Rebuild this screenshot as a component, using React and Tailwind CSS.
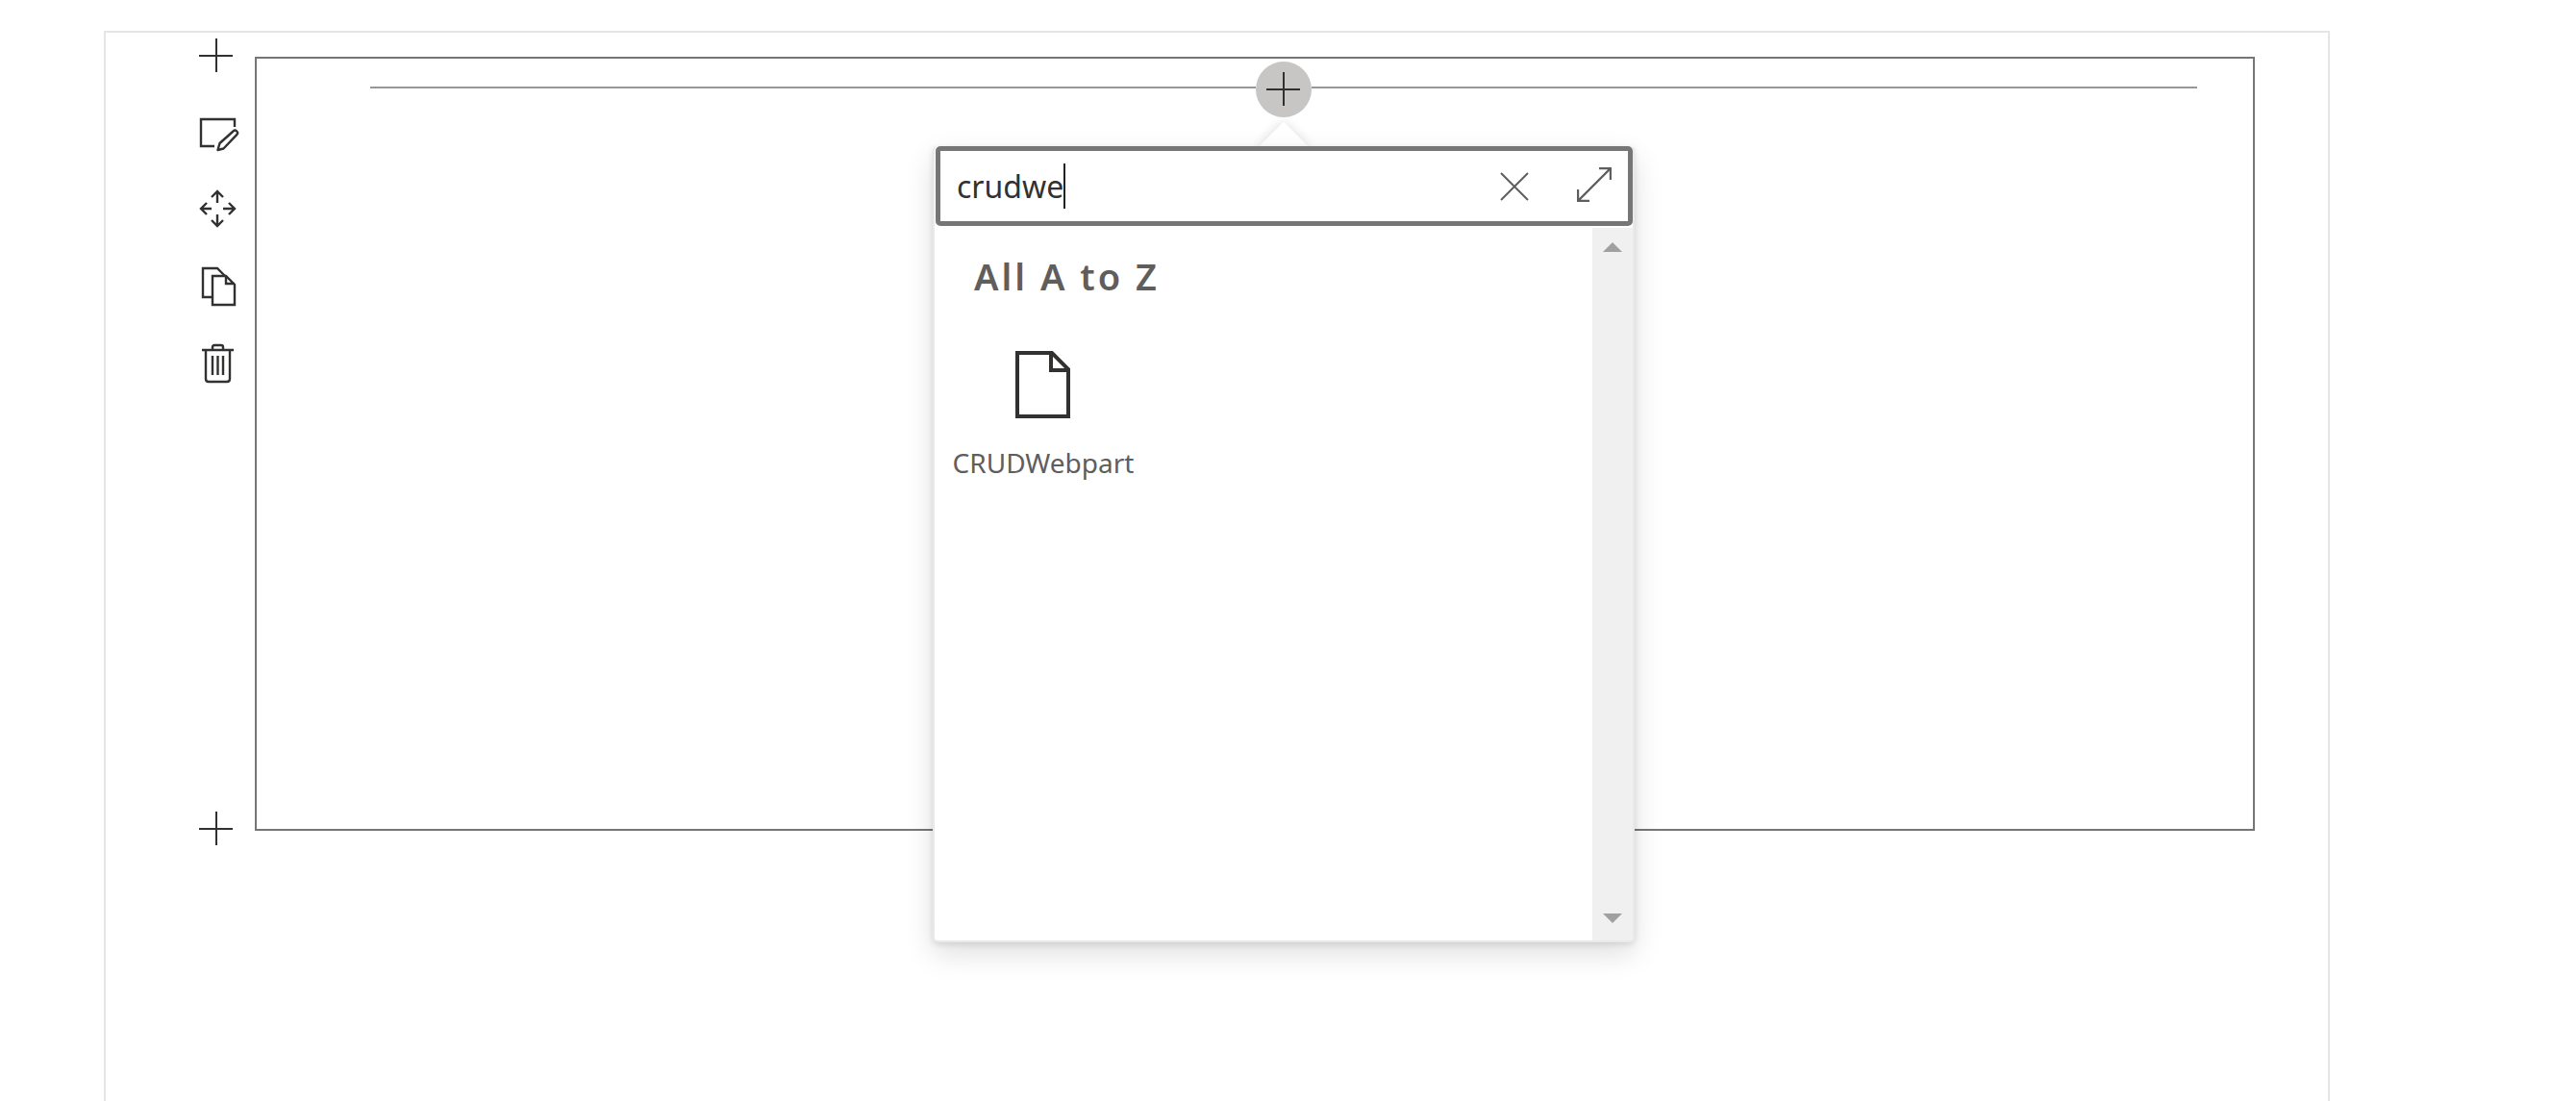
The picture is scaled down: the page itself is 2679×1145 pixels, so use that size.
import React, { useState } from "react";

function PlusIcon() {
  return (
    <svg className="size-9" viewBox="0 0 36 36" fill="none" stroke="currentColor" strokeWidth="2" aria-hidden="true">
      <path d="M18 0v35M0 18h35" />
    </svg>
  );
}

function EditIcon() {
  return (
    <svg className="size-12" viewBox="-1 0 48 48" fill="none" stroke="currentColor" strokeWidth="2.4" aria-hidden="true">
      <path d="M42 18V10H7v28h14" />
      <path d="M24.500 42l2-7 14-12.500a2.600 2.600 0 0 1 3.700 3.700L30.500 40.500z" strokeLinejoin="round" />
    </svg>
  );
}

function MoveIcon() {
  return (
    <svg className="size-12" viewBox="-1 1 48 48" fill="none" stroke="currentColor" strokeWidth="2.4" aria-hidden="true">
      <path d="M24 18V6M18 12l6-6 6 6M24 30v12M18 36l6 6 6-6M18 24H7M13 18l-6 6 6 6M30 24h12M36 18l6 6-6 6" />
    </svg>
  );
}

function CopyIcon() {
  return (
    <svg className="size-12" viewBox="-1 0 48 48" fill="none" stroke="currentColor" strokeWidth="2.4" aria-hidden="true">
      <path d="M19 35H9V5h15l8 8" />
      <path d="M19 13h14l9 9v21H19zM33 13v8h9" />
    </svg>
  );
}

function TrashIcon() {
  return (
    <svg className="size-12" viewBox="-1 0 48 48" fill="none" stroke="currentColor" strokeWidth="2.4" aria-hidden="true">
      <path d="M8 10h33M12 10v30q0 3 3 3h19q3 0 3-3V10M19 10V7q0-2 2-2h7q2 0 2 2v3M19 16v20M24.500 16v20M30 16v20" />
    </svg>
  );
}

function PageIcon() {
  return (
    <svg className="h-[70px] w-[58px]" viewBox="0 0 58 70" fill="none" stroke="currentColor" strokeWidth="4" aria-hidden="true">
      <path d="M2 2h36l17 17v49H2zM37 2v18h18" />
    </svg>
  );
}

function ToolButton({ label, children }) {
  return (
    <button type="button" aria-label={label} className="flex size-12 items-center justify-center">
      {children}
    </button>
  );
}

function Toolbox() {
  const [query, setQuery] = useState("crudwe");
  return (
    <div
      role="dialog"
      aria-label="Add a web part"
      className="absolute top-[88px] left-1/2 w-[730px] -translate-x-1/2"
    >
      <div className="absolute top-0 left-1/2 size-9 -translate-x-1/2 -translate-y-1/2 rotate-45 bg-white shadow-[0_0_12px_rgba(0,0,0,0.14)]" />
      <div className="relative flex min-h-[828px] flex-col rounded-[5px] border-2 border-t-0 border-[#e9e9e9] bg-white pl-px shadow-[0_12px_30px_rgba(0,0,0,0.13),0_2px_7px_rgba(0,0,0,0.11)]">
        <div className="flex h-[83px] items-center rounded-[5px] border-5 border-[#767676] bg-white pr-[17px] pl-[17px]">
          <label className="flex flex-1 items-center">
            <input
              type="text"
              aria-label="Search web parts"
              value={query}
              onChange={(e) => setQuery(e.target.value)}
              className="field-sizing-content h-14 bg-transparent p-0 text-[32px] leading-14 text-[#323130] outline-none"
            />
            <span className="h-[47px] w-0.5 bg-[#222]" />
          </label>
          <button type="button" aria-label="Clear search" className="mr-[50px] text-[#605e5c]">
            <svg className="size-[30px]" viewBox="0 0 30 30" fill="none" stroke="currentColor" strokeWidth="2" aria-hidden="true">
              <path d="M1 1l28 28M29 1L1 29" />
            </svg>
          </button>
          <button type="button" aria-label="Expand" className="mb-1 text-[#605e5c]">
            <svg className="size-9" viewBox="0 0 36 36" fill="none" stroke="currentColor" strokeWidth="2.4" aria-hidden="true">
              <path d="M1 35L35 1M23 1h12v12M1 23v12h12" />
            </svg>
          </button>
        </div>
        <div className="mt-0.5 flex flex-1">
          <div className="flex-1 pt-[22px] pl-2.5 text-[#605e5c]">
            <h2 className="pl-[30px] text-[38px] leading-[56px] font-semibold tracking-[3px]">All A to Z</h2>
            <button type="button" className="mt-[50px] flex w-[204px] flex-col items-center">
              <span className="text-[#323130]">
                <PageIcon />
              </span>
              <span className="mt-[26px] text-[28px] leading-10">CRUDWebpart</span>
            </button>
          </div>
          <div className="flex w-[42px] flex-col items-center justify-between bg-[#f0f0f0] pt-[15px] pb-[18px] text-[#a0a0a0]" aria-hidden="true">
            <svg className="h-2.5 w-5" viewBox="0 0 20 10" fill="currentColor">
              <path d="M10 0l10 10H0z" />
            </svg>
            <svg className="h-2.5 w-5" viewBox="0 0 20 10" fill="currentColor">
              <path d="M10 10L0 0h20z" />
            </svg>
          </div>
        </div>
      </div>
    </div>
  );
}

export default function App() {
  return (
    <div className="flex min-h-screen flex-col bg-white pt-8 pr-64 pl-[108px] font-['Noto_Sans','Open_Sans',sans-serif] text-[#323130]">
      <main className="flex-1 border-2 border-b-0 border-[#e5e5e5]">
        <div className="flex pr-[76px] pl-[91px]">
          <div role="toolbar" aria-label="Section" className="mr-4 flex flex-col justify-between">
            <div className="flex flex-col gap-8">
              <ToolButton label="Add section above"><PlusIcon /></ToolButton>
              <ToolButton label="Edit section"><EditIcon /></ToolButton>
              <ToolButton label="Move section"><MoveIcon /></ToolButton>
              <ToolButton label="Duplicate section"><CopyIcon /></ToolButton>
              <ToolButton label="Delete section"><TrashIcon /></ToolButton>
            </div>
            <ToolButton label="Add section below"><PlusIcon /></ToolButton>
          </div>
          <section className="mt-[25px] mb-[22px] min-h-[805px] flex-1 border-2 border-[#767676] pt-[3px] pr-[58px] pl-[118px]">
            <div className="flex items-center">
              <div className="h-1.5 flex-1 border-t-2 border-[#979797]" />
              <div className="relative">
                <button
                  type="button"
                  aria-label="Add a new web part"
                  className="flex size-[58px] items-center justify-center rounded-full bg-[#c8c6c4]"
                >
                  <PlusIcon />
                </button>
                <Toolbox />
              </div>
              <div className="h-1.5 flex-1 border-t-2 border-[#979797]" />
            </div>
          </section>
        </div>
      </main>
    </div>
  );
}
